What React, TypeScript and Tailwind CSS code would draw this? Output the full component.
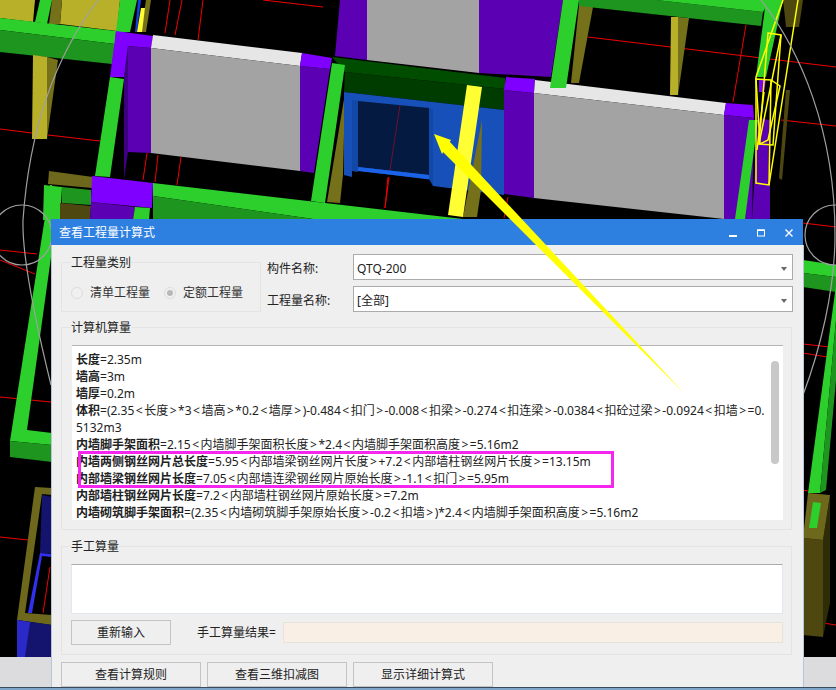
import { Fragment } from "react";

const GREEN = "#2ccf2c";
const GREEN_D = "#1e951e";
const PURPLE = "#8000ff";
const PURPLE_D = "#5c00b3";
const OLIVE = "#b8b028";
const OLIVE_D = "#75701a";
const FRAME = "#6e681c";
const BROWN = "#4f4710";
const NAVY = "#14146e";

// 3D model behind the dialog: [fill, points]
const shapes: [string, string][] = [
  // top left
  [OLIVE, "0,0 35,0 33,22 0,18"],
  [OLIVE, "62,0 120,0 117,31 60,24"],
  [OLIVE_D, "52,0 62,0 60,24 49,24"],
  [GREEN, "40,0 52,0 47,24 35,22"],
  [GREEN, "120,0 137,0 130,32 116,32"],
  [OLIVE_D, "146,0 151,0 146,32 141,32"],
  ["#1040e0", "138,0 141,0 137,32 135,32"],
  ["#ffff33", "141,8 145,8 142,32 137,32"],
  [GREEN, "0,18 116,31 115,44 0,30"],
  [GREEN_D, "0,30 115,44 112,64 0,52"],
  [OLIVE, "33,55 47,57 47,139 32,139"],
  [OLIVE_D, "47,57 58,60 47,139"],

  // first wall
  ["#3c0080", "124,77 128,46 128,152 124,180"],
  [PURPLE, "116,31 153,36 151,48 128,46 124,77 110,77"],
  [PURPLE_D, "128,46 151,48 151,153 128,152"],
  ["#e6e6e6", "153,35 302,53 300,66 151,48"],
  ["#a3a3a3", "151,48 300,66 300,171 151,153"],
  [PURPLE, "302,53 332,58 330,69 300,66"],
  [PURPLE_D, "300,66 330,69 314,173 300,171"],
  [GREEN, "110,77 124,79 110,177 95,176"],

  // second wall top
  [PURPLE_D, "340,0 367,0 367,60 335,56"],
  ["#a3a3a3", "367,0 479,0 479,73 367,60"],
  [PURPLE_D, "479,0 563,0 551,77 479,73"],

  // window bay
  ["#004d00", "332,57 505,78 505,89 345,72"],
  ["#003c00", "345,72 505,89 504,110 344,92"],
  [OLIVE_D, "345,93 343,175 340,203 327,202"],
  ["#1650b8", "344,92 504,110 504,195 433,186 433,180 352,170 352,177 344,175"],
  ["#1248a8", "352,100 358,101 358,172 352,171"],
  ["#1248a8", "429,108 433,109 433,186 429,179"],
  ["#041a40", "358,101 429,108 429,175 358,167"],
  ["#1a62e8", "358,167 429,175 429,179 358,171"],
  [GREEN, "332,63 345,65 325,203 311,201"],
  [OLIVE_D, "482,120 481,190 477,217 463,217"],
  ["#ffff33", "467,85 482,87 463,217 448,215"],

  // second wall
  [PURPLE, "506,77 535,79 534,93 504,90"],
  [PURPLE_D, "504,90 534,93 534,198 504,194"],
  ["#e6e6e6", "535,80 726,103 724,115 534,93"],
  ["#a3a3a3", "534,93 724,115 724,219 534,198"],
  [PURPLE, "726,103 753,105 754,118 724,115"],
  [PURPLE_D, "724,115 754,118 752,219 724,219"],
  [PURPLE_D, "758,118 770,120 770,219 752,219"],
  [GREEN, "749,120 758,120 745,219 735,219"],

  // top right
  [OLIVE_D, "579,5 593,7 579,83 571,83"],
  [OLIVE, "671,17 678,17 678,95 670,95"],
  [OLIVE_D, "678,17 689,18 678,95"],
  [GREEN_D, "579,0 656,0 763,12 761,26 579,6"],
  [GREEN, "656,0 770,0 763,12"],
  [GREEN, "563,0 579,0 566,88 550,88"],
  [BROWN, "783,0 803,0 799,27 786,27"],
  [GREEN, "766,0 783,0 766,77 756,77"],
  [BROWN, "790,90 782,180 779,178 786,90"],
  [PURPLE, "759,80 766,80 764,92 759,92"],

  // bottom of the first bay
  [FRAME, "49,171 93,177 92,188 48,184"],
  [GREEN, "44,185 62,187 60,220 43,220"],
  [GREEN_D, "62,187 91,190 91,205 62,203"],
  [BROWN, "60,203 91,206 90,220 60,220"],
  [PURPLE, "92,176 153,183 152,208 91,202"],
  [PURPLE_D, "91,202 135,207 133,220 90,220"],
  [GREEN, "135,207 150,208 149,220 133,220"],
  [GREEN, "153,183 463,219 320,220 153,196"],
  [GREEN_D, "153,196 320,220 153,220"],

  // left of the dialog
  [GREEN, "50,185 52,185 52,250 27,430 52,433 52,445 10,441"],
  [GREEN_D, "10,441 52,445 52,462 10,457"],
  [FRAME, "35,487 52,488 52,495 42,494 25,613 52,615 52,625 17,620"],
  [NAVY, "42,495 52,497 52,553 40,553"],
  [NAVY, "17,620 52,625 52,657 17,657"],
  ["#2a2ac8", "17,620 30,622 25,657 17,657"],
  ["#3030f0", "40,553 52,554 52,557 42,556 32,613 28,613"],

  // right of the dialog
  [GREEN, "803,260 836,265 836,277 803,273"],
  [GREEN_D, "803,273 836,277 836,292 803,287"],
  [GREEN, "836,285 836,320 820,493 808,493"],
  [GREEN_D, "836,320 836,380 826,490 820,493"],
  ["#2f2c08", "823,540 830,495 830,603 823,637"],
  [BROWN, "803,538 823,540 823,637 803,635"],
  [FRAME, "808,493 830,495 823,540 803,538"],
  [GREEN, "813,502 821,503 817,528 809,528"],
];

const redLines = [
  "263,0 323,7", "170,0 165,33", "182,0 175,35", "203,0 198,40",
  "147,153 143,180", "158,155 155,182", "181,157 177,185",
  "0,129 32,133", "48,135 100,141",
  "388,177 385,208", "508,197 504,218",
  "588,37 836,67", "746,25 733,102", "781,120 836,126",
  "0,250 37,254", "0,260 35,274", "0,397 51,402", "0,537 28,540",
  "803,223 836,227", "803,344 830,347", "803,353 827,357",
  "803,490 808,491", "823,623 836,625", "50,567 43,613",
];

const Backdrop = () => (
  <svg className="absolute inset-0" width={836} height={690} viewBox="0 0 836 690">
    {redLines.map((points) => (
      <polyline key={points} points={points} fill="none" stroke="#f00000" strokeWidth={1} />
    ))}
    {shapes.map(([fill, points]) => (
      <polygon key={points} points={points} fill={fill} />
    ))}
    <line x1={400} y1={105} x2={390} y2={170} stroke="#701030" />
    <line x1={389} y1={177} x2={385} y2={208} stroke="#f00000" />

    {/* selection wireframe */}
    <g fill="none" stroke="#ffff00" strokeWidth={1.5}>
      <polyline points="783,0 756,77 756,183 769,185 798,0" />
      <polygon points="768,33 781,35 773,145 759,144" />
      <polygon points="756,79 771,80 780,86 768,140 760,144" />
      <line x1={771} y1={80} x2={769} y2={185} />
      <line x1={764} y1={92} x2={757} y2={150} />
      <line x1={781} y1={35} x2={759} y2={144} />
    </g>

    {/* construction circles */}
    <g fill="none" stroke="#a0a0a0" strokeWidth={1.2}>
      <circle cx={22} cy={235} r={30} />
      <circle cx={835} cy={235} r={30} />
      <path d="M98 0 C60 50 30 120 23 220 C22 255 35 320 51 385" />
      <path d="M761 0 C800 50 835 130 835 235 C835 290 820 350 803 395" />
    </g>
  </svg>
);

const Arrow = () => (
  <svg className="pointer-events-none absolute inset-0" width={836} height={690} viewBox="0 0 836 690">
    <polygon points="434,134 451,140 442,154" fill="#ffff00" />
    <polygon points="449,141 685,394 441,150" fill="#ffff00" />
  </svg>
);

const Group = ({ title, className, children }: { title: string; className: string; children: React.ReactNode }) => (
  <div className={`relative border border-[#e4e4e4] ${className}`}>
    <span className="absolute top-[-8px] left-[9px] bg-[#efefef] text-[12px] leading-[16px] text-[#222]">{title}</span>
    {children}
  </div>
);

const Select = ({ value }: { value: string }) => (
  <div className="flex h-[26px] w-[440px] items-center justify-between border border-[#ababab] bg-white pt-[4px] pr-[5px] pl-[3px] text-[12px] text-[#222]">
    <span>{value}</span>
    <svg width={6} height={4} viewBox="0 0 6 4">
      <polygon points="0,0 6,0 3,4" fill="#666" />
    </svg>
  </div>
);

const Radio = ({ label, checked }: { label: string; checked?: boolean }) => (
  <div className="flex items-center gap-[7px]">
    <span className="flex h-[12px] w-[12px] items-center justify-center rounded-full border border-[#dcdcdc] bg-[#f0f0f0]">
      {checked && <span className="h-[6px] w-[6px] rounded-full bg-[#b8b8b8]" />}
    </span>
    <span className="text-[12px] text-[#333]">{label}</span>
  </div>
);

const Btn = ({ label, className }: { label: string; className: string }) => (
  <button className={`h-[25px] border border-[#c4c4c4] bg-[#efefef] text-[12px] text-[#222] ${className}`}>{label}</button>
);

const lines: [string, string][] = [
  ["长度", "=2.35m"],
  ["墙高", "=3m"],
  ["墙厚", "=0.2m"],
  ["体积", "=(2.35<长度>*3<墙高>*0.2<墙厚>)-0.484<扣门>-0.008<扣梁>-0.274<扣连梁>-0.0384<扣砼过梁>-0.0924<扣墙>=0."],
  ["", "5132m3"],
  ["内墙脚手架面积", "=2.15<内墙脚手架面积长度>*2.4<内墙脚手架面积高度>=5.16m2"],
  ["内墙两侧钢丝网片总长度", "=5.95<内部墙梁钢丝网片长度>+7.2<内部墙柱钢丝网片长度>=13.15m"],
  ["内部墙梁钢丝网片长度", "=7.05<内部墙连梁钢丝网片原始长度>-1.1<扣门>=5.95m"],
  ["内部墙柱钢丝网片长度", "=7.2<内部墙柱钢丝网片原始长度>=7.2m"],
  ["内墙砌筑脚手架面积", "=(2.35<内墙砌筑脚手架原始长度>-0.2<扣墙>)*2.4<内墙脚手架面积高度>=5.16m2"],
];

// the angle brackets sit wider apart in the original font
const spaced = (text: string) =>
  text.split(/([<>])/).map((part, i) =>
    part === "<" || part === ">" ? (
      <span key={i} className="px-[1.5px]">
        {part}
      </span>
    ) : (
      <Fragment key={i}>{part}</Fragment>
    ),
  );

export default function App() {
  return (
    <div
      className="relative h-[690px] w-[836px] overflow-hidden bg-black"
      style={{ fontFamily: '"Noto Sans", "Noto Sans CJK SC", sans-serif' }}
    >
      <Backdrop />

      {/* strip under the viewport */}
      <div className="absolute right-0 bottom-0 left-0 flex h-[33px] flex-col justify-end bg-[#dcdcde]">
        <div className="h-[3px] border-t border-[#3a4a5a] bg-[#7fa6c8]" />
      </div>

      {/* dialog */}
      <div className="absolute top-[219px] left-[51px] flex h-[468px] w-[753px] flex-col">
        <div className="flex h-[27px] w-[752px] items-center justify-between bg-[#2d7fe0] pt-[2px] pr-[10px] pl-[8px]">
          <span className="text-[12px] text-white">查看工程量计算式</span>
          <div className="flex items-center gap-[20px]">
            <svg width={8} height={8} viewBox="0 0 8 8">
              <rect x={0} y={6} width={8} height={2} fill="#fff" />
            </svg>
            <svg width={8} height={8} viewBox="0 0 8 8">
              <rect x={0.5} y={1} width={7} height={6} fill="none" stroke="#fff" />
              <rect x={0} y={0.5} width={8} height={1.5} fill="#fff" />
            </svg>
            <svg width={8} height={8} viewBox="0 0 8 8">
              <path d="M0.5 0.5 L7.5 7.5 M7.5 0.5 L0.5 7.5" stroke="#fff" strokeWidth={1.4} />
            </svg>
          </div>
        </div>

        <div className="flex-1 border-x border-[#b8c4d8] bg-[#efefef] pl-[9px]">
          <div className="flex items-start pt-[9px]">
            <Group title="工程量类别" className="mt-[8px] flex h-[50px] w-[200px] items-center gap-[14px] pt-[11px] pl-[9px]">
              <Radio label="清单工程量" />
              <Radio label="定额工程量" checked />
            </Group>
            <div className="ml-[6px] flex flex-col gap-[6px]">
              <div className="flex items-center">
                <span className="w-[86px] pt-[4px] text-[12px] text-[#222]">构件名称:</span>
                <Select value="QTQ-200" />
              </div>
              <div className="flex items-center">
                <span className="w-[86px] pt-[4px] text-[12px] text-[#222]">工程量名称:</span>
                <Select value="[全部]" />
              </div>
            </div>
          </div>

          <Group title="计算机算量" className="mt-[15px] h-[203px] w-[731px] pt-[17px] pl-[10px]">
            <div className="relative h-[175px] w-[711px] border-t border-[#b4b4b4] bg-white pt-[6px] pl-[4px] text-[12px] leading-[15px] text-[#222]">
              {lines.map(([name, rest], i) => (
                <div key={i} className="mb-[2px] h-[15px] whitespace-nowrap">
                  {name && <b>{name}</b>}
                  {spaced(rest)}
                </div>
              ))}
              <div className="absolute top-[15px] left-[699px] h-[103px] w-[8px] rounded-full bg-[#c8c8c8]" />
              <div className="absolute top-[105px] left-[6px] h-[37px] w-[536px] border-[3px] border-[#f526ee]" />
            </div>
          </Group>

          <Group title="手工算量" className="mt-[16px] h-[109px] w-[731px] pt-[17px] pl-[9px]">
            <div className="h-[50px] w-[712px] border border-[#e2e6ee] border-t-[#ababab] bg-white" />
            <div className="mt-[6px] flex items-center">
              <Btn label="重新输入" className="w-[100px]" />
              <span className="ml-[26px] w-[86px] text-[12px] text-[#222]">手工算量结果=</span>
              <div className="h-[21px] w-[500px] border border-[#e6e2dc] bg-[#f9efe5]" />
            </div>
          </Group>

          <div className="mt-[7px] flex gap-[6px]">
            <Btn label="查看计算规则" className="w-[140px]" />
            <Btn label="查看三维扣减图" className="w-[140px]" />
            <Btn label="显示详细计算式" className="w-[140px]" />
          </div>
        </div>
      </div>

      <Arrow />
    </div>
  );
}
